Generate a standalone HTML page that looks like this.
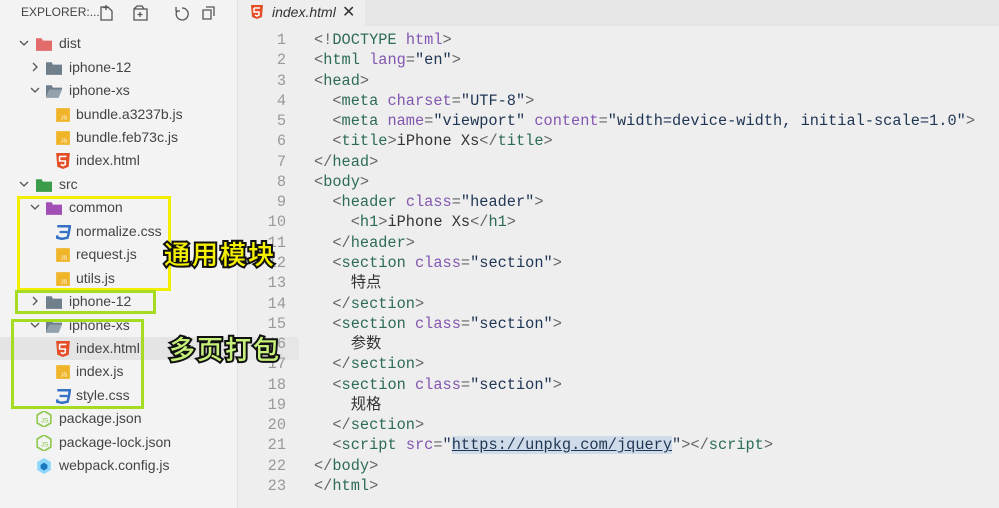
<!DOCTYPE html>
<html><head><meta charset="utf-8"><style>
*{margin:0;padding:0;box-sizing:border-box}
body{width:999px;height:508px;overflow:hidden;background:#eeeeee;font-family:"Liberation Sans","Noto Sans CJK SC",sans-serif;position:relative}
#side{position:absolute;left:0;top:0;width:238px;height:508px;background:#f3f3f3;border-right:1px solid #e2e2e2}
.hdr{position:absolute;top:5px;left:21px;font-size:12px;color:#444}
.row{position:absolute;left:0;width:237px;height:23px;font-size:14px;color:#444;line-height:23px;white-space:nowrap}
.row span{position:absolute}
.chev{color:#555;font-size:12px}
.ic{width:16px;height:16px;display:block}
#tabs{position:absolute;left:238px;top:0;width:761px;height:26px;background:#e6e6e6}
#tab{position:absolute;left:238px;top:0;width:127px;height:26px;background:#eeeeee;font-size:14px;font-style:italic;color:#333;line-height:25px}
.code{position:absolute;left:0;top:30px;font-family:"Liberation Mono","Noto Sans CJK SC",monospace;font-size:15.3px;line-height:20.27px;white-space:pre}
.ln{position:absolute;left:240px;width:46px;text-align:right;color:#999}
.cl{position:absolute;left:314px;color:#333}
.b{color:#666}.t{color:#2d6b58}.a{color:#8457b0}.s{color:#1f3554}
.box{position:absolute;border:3px solid}
.cap{position:absolute;font-size:26px;font-weight:500;font-family:"Noto Sans CJK SC",sans-serif;-webkit-text-stroke:4px #111;paint-order:stroke fill;letter-spacing:2px}
</style></head><body>
<div id="side">
<div class="hdr">EXPLORER:...</div>
<svg style="position:absolute;left:98px;top:4px" width="130" height="18" fill="none" stroke="#555" stroke-width="1.3">
<path d="M3 3h7l4 4v9H3z M8 1v5 M5 3.5h6"/>
<path d="M36 5h13v11H36z M36 5l3-3h5l2 3 M42 8v5 M39.5 10.5h5"/>
<path d="M84 4a6 6 0 1 1-5 3 M78 3v4h4"/>
<path d="M105 6h8v9h-8z M108 3h8v9"/>
</svg>
</div>
<div style="position:absolute;left:0;top:337px;width:238px;height:23px;background:#e4e4e4"></div>
<div style="position:absolute;left:239px;top:337px;width:60px;height:23px;background:#e6e6e6"></div>

<div id="tabs"></div>
<div id="tab"><svg style="position:absolute;left:13px;top:5px" width="12" height="14"><path d="M0 0h12l-1 12-5 2-5-2z" fill="#e44d26"/><path d="M3 3h6M3 3v4h5v3l-2 1-2-1" stroke="#fff" stroke-width="1.5" fill="none"/></svg><span style="position:absolute;left:34px">index.html</span><span style="position:absolute;left:104px;font-style:normal;font-size:16px">✕</span></div>

<div id="rows"></div>

<div class="code" id="code"></div>

<div class="box" style="left:17px;top:196px;width:154px;height:95px;border-color:#f2ee00"></div>
<div class="box" style="left:15px;top:290px;width:141px;height:24px;border-color:#a6dc1f"></div>
<div class="box" style="left:11px;top:319px;width:133px;height:90px;border-color:#a6dc1f"></div>
<div class="cap" style="left:164px;top:235px;color:#f5f000">通用模块</div>
<div class="cap" style="left:169px;top:330px;color:#c6f07a">多页打包</div>

<script>
const rows=[
[43,22,'v',36,'fr','dist'],
[67,33,'>',46,'fg','iphone-12'],
[90,33,'v',46,'fgo','iphone-xs'],
[114,0,'',55,'js','bundle.a3237b.js'],
[137,0,'',55,'js','bundle.feb73c.js'],
[160,0,'',55,'h5','index.html'],
[184,22,'v',36,'fgr','src'],
[207,33,'v',46,'fp','common'],
[231,0,'',55,'css','normalize.css'],
[254,0,'',55,'js','request.js'],
[278,0,'',55,'js','utils.js'],
[301,33,'>',46,'fg','iphone-12'],
[325,33,'v',46,'fgo','iphone-xs'],
[348,0,'',55,'h5','index.html'],
[371,0,'',55,'js','index.js'],
[395,0,'',55,'css','style.css'],
[418,0,'',36,'nj','package.json'],
[442,0,'',36,'nj','package-lock.json'],
[465,0,'',36,'wp','webpack.config.js']];
function icon(t){
const m={fr:'<path d="M0 2h5l1 2h8v9H0z" fill="#e26b6b"/>',fg:'<path d="M0 2h5l1 2h8v9H0z" fill="#6f7f8c"/>',fgo:'<path d="M0 2h5l1 2h8v2H3l-3 7z" fill="#6f7f8c"/><path d="M3 6h11l-3 7H0z" fill="#93a1ac"/>',fgr:'<path d="M0 2h5l1 2h8v9H0z" fill="#3b9c4a"/>',fp:'<path d="M0 2h5l1 2h8v9H0z" fill="#a24fb5"/>',
js:'<rect x="1" y="1" width="12" height="12" fill="#f0b429"/><text x="5" y="11" font-size="5" fill="#fff" font-family="Liberation Sans">JS</text>',
h5:'<path d="M1 0h12l-1 12-5 2-5-2z" fill="#e44d26"/><path d="M4 3h6M4 3v4h5v3l-2 1-2-1" stroke="#fff" stroke-width="1.4" fill="none"/>',
css:'<path d="M2 2h11l-1 6-1 4-5 1-4-1 0-2" stroke="#3572c6" stroke-width="2.2" fill="none"/><path d="M4 7h7" stroke="#3572c6" stroke-width="2"/>',
nj:'<path d="M7 0l6 3.5v7L7 14 1 10.5v-7z" fill="none" stroke="#8cc84b" stroke-width="1.4"/><text x="4" y="10" font-size="6" fill="#8cc84b" font-family="Liberation Sans">JS</text>',
wp:'<path d="M7 0l6 3.5v7L7 14 1 10.5v-7z" fill="#8ed6fb"/><path d="M7 4l3 2v3l-3 2-3-2V6z" fill="#1c78c0"/>'};
return '<svg class="ic" viewBox="0 0 14 14">'+m[t]+'</svg>';}
let h='';
for(const r of rows){h+=`<div class="row" style="top:${r[0]-11}px">`+(r[2]?`<span class="chev" style="left:${r[1]-4}px;top:0">${r[2]=='v'?'<svg width="12" height="23"><path d="M2 9l4 4 4-4" stroke="#555" fill="none" stroke-width="1.3"/></svg>':'<svg width="12" height="23"><path d="M4 7l4 4-4 4" stroke="#555" fill="none" stroke-width="1.3"/></svg>'}</span>`:'')+`<span style="left:${r[3]}px;top:4px;line-height:0">${icon(r[4])}</span><span style="left:${r[3]+(r[4][0]=='f'?23:(r[4]=='nj'||r[4]=='wp')?23:21)}px">${r[5]}</span></div>`;}
document.getElementById('rows').innerHTML=h;
const B=s=>'<span class="b">'+s+'</span>',T=s=>'<span class="t">'+s+'</span>',A=s=>'<span class="a">'+s+'</span>',S=s=>'<span class="s">'+s+'</span>';
const o=n=>B('&lt;')+T(n),c=B('&gt;'),e=n=>B('&lt;/')+T(n)+c;
const L=[
B('&lt;!')+T('DOCTYPE')+' '+A('html')+c,
o('html')+' '+A('lang')+B('=')+S('"en"')+c,
o('head')+c,
'  '+o('meta')+' '+A('charset')+B('=')+S('"UTF-8"')+c,
'  '+o('meta')+' '+A('name')+B('=')+S('"viewport"')+' '+A('content')+B('=')+S('"width=device-width, initial-scale=1.0"')+c,
'  '+o('title')+c+'iPhone Xs'+e('title'),
e('head'),
o('body')+c,
'  '+o('header')+' '+A('class')+B('=')+S('"header"')+c,
'    '+o('h1')+c+'iPhone Xs'+e('h1'),
'  '+e('header'),
'  '+o('section')+' '+A('class')+B('=')+S('"section"')+c,
'    特点',
'  '+e('section'),
'  '+o('section')+' '+A('class')+B('=')+S('"section"')+c,
'    参数',
'  '+e('section'),
'  '+o('section')+' '+A('class')+B('=')+S('"section"')+c,
'    规格',
'  '+e('section'),
'  '+o('script')+' '+A('src')+B('=')+S('"<span style="background:#cfdbe8;text-decoration:underline">https://unpkg.com/jquery</span>"')+c+e('script'),
e('body'),
e('html')];
let ch='';
L.forEach((l,i)=>{const y=i*20.27;ch+=`<div class="ln" style="top:${y}px">${i+1}</div><div class="cl" style="top:${y}px">${l}</div>`;});
document.getElementById('code').innerHTML=ch;
</script>
</body></html>
